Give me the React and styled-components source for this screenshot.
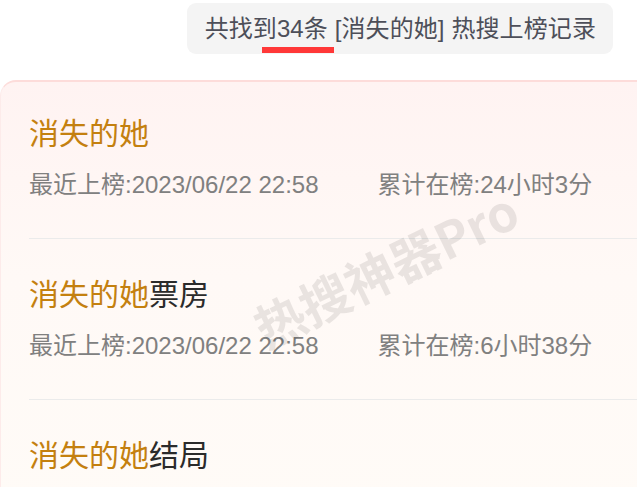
import React from "react";
import styled, { createGlobalStyle } from "styled-components";

const GlobalStyle = createGlobalStyle`
  html, body {
    margin: 0;
    padding: 0;
    background: #ffffff;
    overflow: hidden;
  }
  body {
    font-family: "Liberation Sans", "Noto Sans CJK SC", sans-serif;
  }
`;

const Page = styled.div`
  width: 637px;
  height: 487px;
  overflow: hidden;
`;

const TopBar = styled.div`
  display: flex;
  justify-content: flex-end;
  padding: 3px 24px 0 0;
`;

const Pill = styled.div`
  position: relative;
  height: 51px;
  display: flex;
  align-items: center;
  padding: 0 17px 0 18px;
  background: #f4f4f4;
  border-radius: 9px;
  font-size: 24px;
  line-height: 34px;
  letter-spacing: 0.1px;
  color: #4d4f59;
  white-space: nowrap;
`;

const Underline = styled.span`
  position: absolute;
  left: 75px;
  bottom: 1px;
  width: 72px;
  height: 6px;
  background: #ff3838;
`;

const Card = styled.div`
  position: relative;
  margin-top: 26px;
  width: 754px;
  min-height: 430px;
  box-sizing: border-box;
  padding: 0 28px;
  border-top: 2px solid #fddcda;
  border-left: 1px solid #fdebea;
  border-radius: 16px 16px 0 0;
  background: linear-gradient(180deg, #fff3f2 0%, #fff9f6 45%, #fffbf7 100%);
`;

const Item = styled.div`
  padding: 35px 0 36px;
  border-bottom: 1px solid #ebebeb;
  &:first-child {
    padding-top: 31px;
  }
`;

const Title = styled.div`
  font-size: 30px;
  line-height: 42px;
  color: #2b2b2b;
`;

const Hit = styled.span`
  color: #c4800f;
`;

const Meta = styled.div`
  margin-top: 13px;
  display: grid;
  grid-template-columns: 1fr 1fr;
  font-size: 24px;
  line-height: 34px;
  color: #808080;
`;

const Watermark = styled.span`
  position: absolute;
  left: 384px;
  top: 185px;
  transform: translate(-50%, -50%) rotate(-26deg);
  font-family: "Noto Sans CJK SC", "Noto Sans", sans-serif;
  font-size: 50px;
  line-height: 56px;
  font-weight: 700;
  letter-spacing: 0;
  color: rgba(0, 0, 0, 0.085);
  white-space: nowrap;
  pointer-events: none;
`;

const items = [
  { rest: "", latest: "2023/06/22 22:58", total: "24小时3分" },
  { rest: "票房", latest: "2023/06/22 22:58", total: "6小时38分" },
  { rest: "结局" },
];

export default function App() {
  return (
    <Page>
      <GlobalStyle />
      <TopBar>
        <Pill>
          共找到34条 [消失的她] 热搜上榜记录
          <Underline />
        </Pill>
      </TopBar>
      <Card>
        {items.map((it, i) => (
          <Item key={i}>
            <Title>
              <Hit>消失的她</Hit>
              {it.rest}
            </Title>
            {it.latest && (
              <Meta>
                <span>最近上榜:{it.latest}</span>
                <span>累计在榜:{it.total}</span>
              </Meta>
            )}
          </Item>
        ))}
        <Watermark>热搜神器Pro</Watermark>
      </Card>
    </Page>
  );
}
